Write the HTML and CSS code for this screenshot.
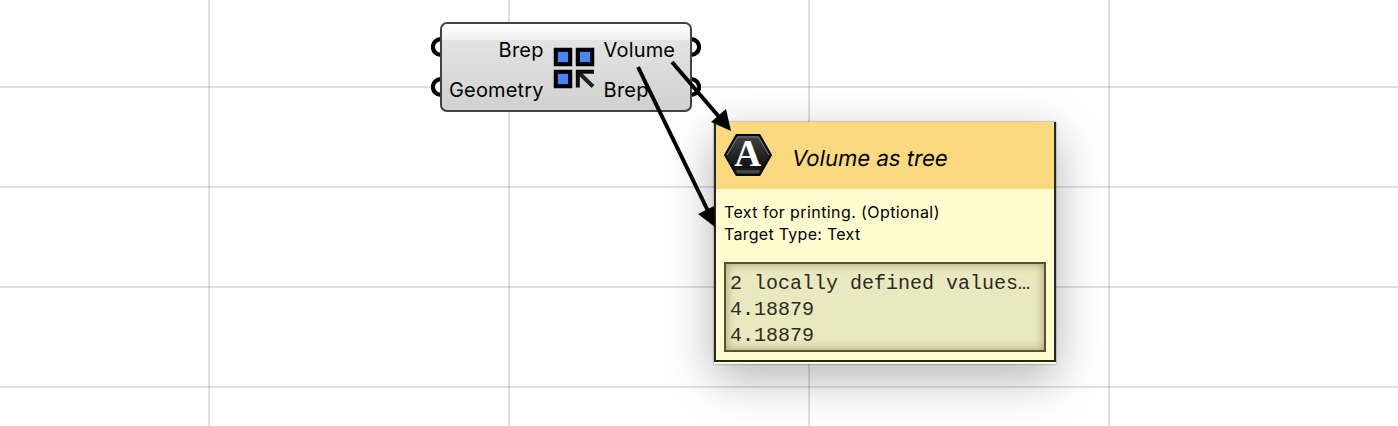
FILE: index.html
```html
<!DOCTYPE html>
<html lang="en">
<head>
<meta charset="utf-8">
<title>Volume component</title>
<link rel="stylesheet" href="styles.css">
</head>
<body>
<main class="canvas">
  <section class="node">
    <svg class="grips" width="270" height="90" viewBox="0 0 270 90" fill="#fff" stroke="#000" stroke-width="4.2">
      <circle cx="9.8" cy="25" r="7.9"/><circle cx="9.8" cy="65" r="7.9"/>
      <circle cx="260.2" cy="25" r="7.9"/><circle cx="260.2" cy="65" r="7.9"/>
    </svg>
    <div class="node-body">
      <div class="params inputs"><span class="param brep">Brep</span><span class="param geometry">Geometry</span></div>
      <svg class="node-icon" width="42" height="42" viewBox="0 0 42 42">
        <g fill="#4a86f7" stroke="#000" stroke-width="4.1">
          <rect x="2.8" y="2.8" width="14.4" height="14.4"/>
          <rect x="24.8" y="2.8" width="14.4" height="14.4"/>
          <rect x="2.8" y="24.8" width="14.4" height="14.4"/>
        </g>
        <path d="M25 25L40 39.5" stroke="#222" stroke-width="4"/>
        <path d="M24.8 40.5V24.8H41" fill="none" stroke="#0c0c0c" stroke-width="4"/>
      </svg>
      <div class="params outputs"><span class="param volume">Volume</span><span class="param brep">Brep</span></div>
    </div>
  </section>

  <aside class="tooltip">
    <header class="tooltip-head">
      <svg class="badge" width="48" height="44" viewBox="0 0 48 44">
        <defs><linearGradient id="hex" x1="0" y1="0" x2="0" y2="1"><stop offset="0" stop-color="#454545"/><stop offset=".5" stop-color="#242424"/><stop offset=".8" stop-color="#111"/><stop offset="1" stop-color="#303030"/></linearGradient></defs>
        <path d="M12.5 2H35.5L47 22L35.5 42H12.5L1 22Z" fill="url(#hex)" stroke="#080808" stroke-width="2"/>
        <path d="M3 22L13.7 4H34.3L45 22" fill="none" stroke="#777" stroke-width="1"/>
        <path d="M12 37.3H36L34.5 40H13.5Z" fill="#4a4a4a"/>
        <text x="10.3" y="33" textLength="27" lengthAdjust="spacingAndGlyphs" class="badge-letter">A</text>
      </svg>
      <h1 class="title">Volume as tree</h1>
    </header>
    <div class="tooltip-body">
      <p class="desc"><span class="line-a">Text for printing. (Optional)</span><br><span class="line-b">Target Type: Text</span></p>
      <pre class="values">2 locally defined values…
4.18879
4.18879</pre>
    </div>
  </aside>

  <svg class="arrows" width="1398" height="426" viewBox="0 0 1398 426">
    <g stroke="#000" stroke-width="4"><path d="M672 62L720 118"/><path d="M638 67L708 211"/></g>
    <path d="M731 131L711 122L726 109Z"/>
    <path d="M715 227L698 214L714 206Z"/>
  </svg>
</main>
</body>
</html>
```
FILE: styles.css
```css
* { box-sizing: border-box; }
body { margin: 0; background: #fff; }

.canvas {
  position: relative;
  width: 1398px;
  height: 426px;
  overflow: hidden;
  font-family: Inter, "Liberation Sans", sans-serif;
  color: #000;
  background:
    linear-gradient(90deg, rgba(0,0,0,.125) 2px, transparent 2px) 208px 0 / 300px 100px,
    linear-gradient(rgba(0,0,0,.125) 2px, transparent 2px) 0 86px / 300px 100px,
    #fff;
}

.node { position: absolute; left: 440px; top: 22px; width: 252px; height: 90px; }
.grips { position: absolute; left: -9px; top: 0; }
.node-body {
  position: relative;
  height: 90px;
  padding: 0 15px 0 7px;
  display: flex;
  border: 2px solid #424242;
  border-radius: 7px;
  background: linear-gradient(#fff 0, #f0f0f0 16px, #e3e3e3 16px, #d1d1d1 100%);
}
.params { display: flex; flex-direction: column; padding-top: 6px; font-size: 20px; line-height: 40px; white-space: nowrap; }
.param { height: 40px; }
.inputs { width: 95px; align-items: flex-end; }
.outputs { align-items: flex-start; }
.brep { letter-spacing: .2px; }
.geometry { letter-spacing: .15px; }
.volume { letter-spacing: .15px; }
.node-icon { margin: 23px 9px 0 9px; flex: none; }

.tooltip {
  position: absolute;
  left: 714px;
  top: 122px;
  width: 342px;
  height: 242px;
  background: #fffdd0;
  border-bottom: 2px solid #fffdd0;
  box-shadow: 0 0 2px rgba(0,0,0,.45), 0 14px 44px rgba(0,0,0,.3);
}
.tooltip-head { height: 67px; padding: 11px 8px 0; display: flex; background: #fad97f; border: solid #282723; border-width: 0 2px; }
.badge-letter { font: 700 38px "Liberation Serif", serif; fill: #fff; }
/* slanted upright letterforms keep the two-storey "a" */
.title { margin: 0 0 0 20px; font-size: 22px; line-height: 50px; font-weight: 400; letter-spacing: .06px; white-space: nowrap; transform: skewX(-10deg); }
.tooltip-body { height: 173px; padding: 12px 8px 8px; border: solid #282723; border-width: 0 2px 2px; }
.desc { margin: 0; font-size: 16px; line-height: 22px; white-space: nowrap; }
.line-a { letter-spacing: .41px; }
.line-b { letter-spacing: .28px; }
.values {
  margin: 17px 0 0;
  height: 90px;
  padding: 7px 4px 0;
  border: 2px solid #5f512d;
  background: #e9e8be;
  box-shadow: inset 0 0 10px rgba(75,70,35,.48);
  font: 20px/26px "Liberation Mono", monospace;
  color: #2c2c1e;
}
.arrows { position: absolute; left: 0; top: 0; }
```
